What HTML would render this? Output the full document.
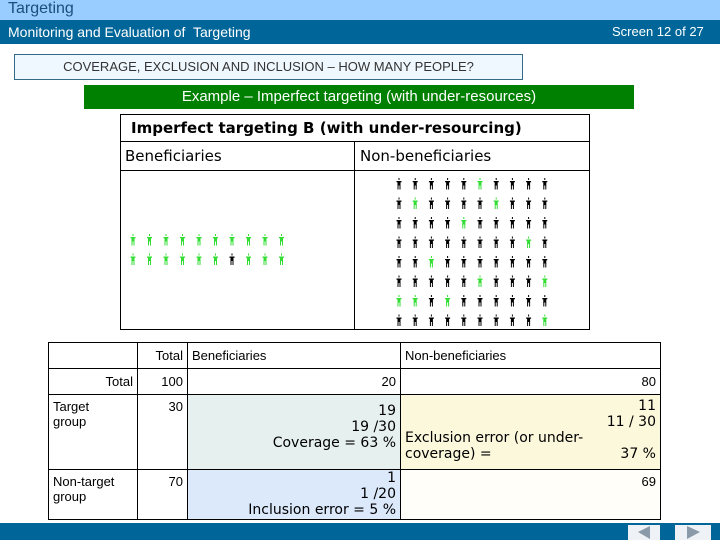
<!DOCTYPE html>
<html><head><meta charset="utf-8"><style>
body{margin:0;width:720px;height:540px;position:relative;overflow:hidden;background:#fff;font-family:"DejaVu Sans","Liberation Sans",sans-serif;}
.a{position:absolute;}
td{border:1.5px solid #000;padding:0 4px;vertical-align:top;font-size:13px;}
</style></head><body>
<div class="a" style="left:0;top:0;width:720px;height:20px;background:#99ccff;"></div>
<div class="a" style="left:8px;top:0;font-size:16px;color:#1a4f7a;font-family:'Liberation Sans',sans-serif;">Targeting</div>
<div class="a" style="left:0;top:20px;width:720px;height:24px;background:#006699;"></div>
<div class="a" style="left:8px;top:24px;font-size:14px;color:#fff;font-family:'Liberation Sans',sans-serif;">Monitoring and Evaluation of&nbsp; Targeting</div>
<div class="a" style="left:612px;top:24px;font-size:13px;color:#fff;font-family:'Liberation Sans',sans-serif;">Screen 12 of 27</div>
<div class="a" style="left:14px;top:54px;width:507px;height:24px;border:1px solid #336b87;background:#f0f8ff;font-size:13px;color:#333;text-align:center;line-height:24px;font-family:'Liberation Sans',sans-serif;">COVERAGE, EXCLUSION AND INCLUSION – HOW MANY PEOPLE?</div>
<div class="a" style="left:84px;top:85px;width:550px;height:24px;background:#008000;color:#fff;font-size:15px;text-align:center;line-height:24px;font-family:'Liberation Sans',sans-serif;">Example – Imperfect targeting (with under-resources)</div>
<div class="a" style="left:120px;top:114px;width:468px;height:214px;border:1.5px solid #000;"></div>
<div class="a" style="left:120px;top:141px;width:470px;border-top:1.5px solid #000;"></div>
<div class="a" style="left:120px;top:170px;width:470px;border-top:1.5px solid #000;"></div>
<div class="a" style="left:354px;top:141px;height:188px;border-left:1.5px solid #000;"></div>
<div class="a" style="left:131px;top:119px;font-size:15px;font-weight:bold;">Imperfect targeting B (with under-resourcing)</div>
<div class="a" style="left:125px;top:147px;font-size:15px;">Beneficiaries</div>
<div class="a" style="left:360px;top:147px;font-size:15px;">Non-beneficiaries</div>
<svg class="a" style="left:0;top:0" width="720" height="540" id="s"></svg>
<table class="a" style="left:48px;top:342px;width:613px;height:178px;border-collapse:collapse;table-layout:fixed;font-family:'Liberation Sans',sans-serif;">
<colgroup><col style="width:89px"><col style="width:50px"><col style="width:213px"><col></colgroup>
<tr style="height:25px"><td></td><td style="text-align:right;line-height:25px">Total</td><td style="line-height:25px">Beneficiaries</td><td style="line-height:25px">Non-beneficiaries</td></tr>
<tr style="height:25px"><td style="text-align:right;line-height:25px">Total</td><td style="text-align:right;line-height:25px">100</td><td style="text-align:right;line-height:25px">20</td><td style="text-align:right;line-height:25px">80</td></tr>
<tr style="height:75px"><td style="padding-top:4px">Target<br>group</td><td style="text-align:right;padding-top:4px">30</td><td style="background:#e6f0ee;text-align:right;padding-top:8px;font-size:14px;line-height:16px;font-family:'DejaVu Sans',sans-serif">19<br>19 /30<br>Coverage = 63 %</td><td style="background:#fbf8dc;text-align:right;padding-top:3px;font-size:14px;line-height:16px;font-family:'DejaVu Sans',sans-serif">11<br>11 / 30<div style="text-align:left">Exclusion error (or under-</div><div style="display:flex;justify-content:space-between"><span>coverage) =</span><span>37 %</span></div></td></tr>
<tr><td style="padding-top:4px">Non-target<br>group</td><td style="text-align:right;padding-top:4px">70</td><td style="background:#dbe9fb;text-align:right;padding-top:0;font-size:14px;line-height:16px;font-family:'DejaVu Sans',sans-serif">1<br>1 /20<br>Inclusion error = 5 %</td><td style="text-align:right;padding-top:4px;background:#fffef8">69</td></tr>
</table>
<div class="a" style="left:0;top:523px;width:720px;height:17px;background:#006699;"></div>
<div class="a" style="left:628px;top:525px;width:32px;height:15px;background:#eef2f6;"></div>
<div class="a" style="left:675px;top:525px;width:36px;height:15px;background:#eef2f6;"></div>
<svg class="a" style="left:0;top:0" width="720" height="540"><polygon points="638,532 650,526 650,539" fill="#8a9aa8"/><polygon points="687,526 700,532 687,539" fill="#8a9aa8"/></svg>
<script>
var s=document.getElementById('s'),h='';
function f(x,y,g){var c=g?'#33dd33':'#000';h+='<g transform="translate('+x+','+y+')" fill="'+c+'"><rect x="3.5" y="0" width="1" height="2"/><rect x="1.5" y="3" width="5" height="1.3"/><rect x="2.5" y="3" width="3" height="4.5"/><rect x="2.5" y="7" width="1" height="4.5"/><rect x="4.5" y="7" width="1" height="4.5"/></g>';}
for(var r=0;r<2;r++)for(var c=0;c<10;c++)f(129+c*16.5,234+r*19.5,!(r==1&&c==6));
var G=[[5],[1,6],[4],[8],[2],[5,9],[0,1,3],[9]];
for(var r=0;r<8;r++)for(var c=0;c<10;c++)f(395+c*16.2,178+r*19.5,G[r].indexOf(c)>=0);
s.innerHTML=h;
</script>
</body></html>
